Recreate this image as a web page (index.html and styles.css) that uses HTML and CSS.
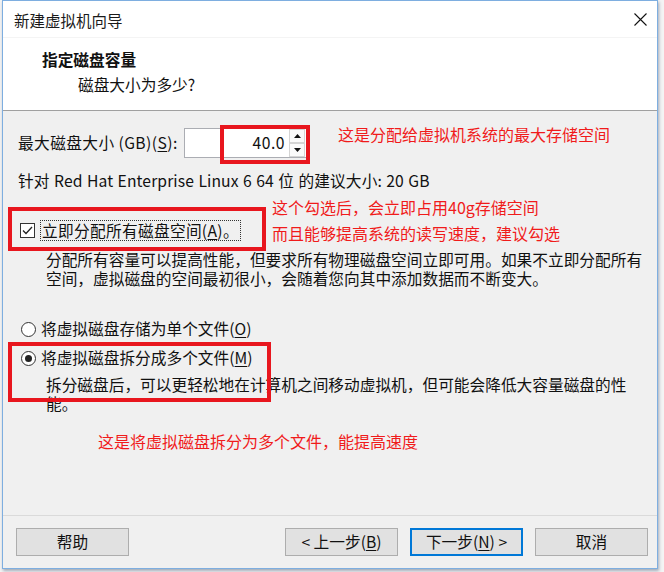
FILE: index.html
```html
<!DOCTYPE html>
<html lang="zh-CN">
<head>
<meta charset="utf-8">
<title>新建虚拟机向导</title>
<link rel="stylesheet" href="styles.css">
</head>
<body>
<div class="window">
  <div class="titlebar">
    <span class="title">新建虚拟机向导</span>
    <svg class="close" width="13" height="13" viewBox="0 0 13 13"><path d="M0.5 0.5 L12.5 12.5 M12.5 0.5 L0.5 12.5" stroke="#111" stroke-width="1.1" fill="none"/></svg>
  </div>
  <div class="header">
    <div class="h-title">指定磁盘容量</div>
    <div class="h-sub">磁盘大小为多少?</div>
  </div>
  <div class="content">
    <div class="size-row">
      <span class="label">最大磁盘大小 (GB)(<u>S</u>):</span>
      <div class="spin">
        <span class="spin-value">40.0</span>
        <div class="spin-btns">
          <span class="spin-btn"><svg width="7" height="4" viewBox="0 0 7 4"><path d="M0 4 L3.5 0 L7 4 Z" fill="#111"/></svg></span>
          <span class="spin-btn"><svg width="7" height="4" viewBox="0 0 7 4"><path d="M0 0 L3.5 4 L7 0 Z" fill="#111"/></svg></span>
        </div>
      </div>
      <span class="note note-size">这是分配给虚拟机系统的最大存储空间</span>
    </div>
    <div class="recommend">针对 Red Hat Enterprise Linux 6 64 位 的建议大小: 20 GB</div>
    <div class="check-block">
      <div class="check-row">
        <span class="checkbox"><svg width="11" height="9" viewBox="0 0 11 9"><path d="M1 4.5 L4 7.5 L10 1" stroke="#222" stroke-width="1.3" fill="none"/></svg></span>
        <span class="focus">立即分配所有磁盘空间(<u>A</u>)。</span>
      </div>
      <div class="check-notes">
        <div class="note">这个勾选后，会立即占用40g存储空间</div>
        <div class="note note-gap">而且能够提高系统的读写速度，建议勾选</div>
      </div>
    </div>
    <p class="desc desc-alloc">分配所有容量可以提高性能，但要求所有物理磁盘空间立即可用。如果不立即分配所有<br>空间，虚拟磁盘的空间最初很小，会随着您向其中添加数据而不断变大。</p>
    <div class="radio-row radio-first"><span class="radio"></span><span>将虚拟磁盘存储为单个文件(<u>O</u>)</span></div>
    <div class="radio-row radio-second"><span class="radio on"></span><span>将虚拟磁盘拆分成多个文件(<u>M</u>)</span></div>
    <p class="desc desc-split">拆分磁盘后，可以更轻松地在计算机之间移动虚拟机，但可能会降低大容量磁盘的性<br>能。</p>
    <div class="note note-bottom">这是将虚拟磁盘拆分为多个文件，能提高速度</div>
  </div>
  <div class="footer">
    <button class="btn">帮助</button>
    <span class="spacer"></span>
    <button class="btn">&lt; 上一步(<u>B</u>)</button>
    <button class="btn btn-default">下一步(<u>N</u>) &gt;</button>
    <button class="btn">取消</button>
  </div>
  <div class="mark mark-spin"></div>
  <div class="mark mark-check"></div>
  <div class="mark mark-radio"></div>
</div>
</body>
</html>
```
FILE: styles.css
```css
html, body {
  margin: 0;
  padding: 0;
  background: #f4f4f4;
  overflow: hidden;
}
body {
  font-family: "Noto Sans CJK SC", "Noto Sans", sans-serif;
  font-size: 15.7px;
  color: #111;
  width: 664px;
  height: 572px;
}
.window {
  position: relative;
  margin-left: 2px;
  width: 656px;
  height: 569px;
  box-sizing: border-box;
  border: 1px solid #7eaee0;
  background: #f0f0f0;
  display: flex;
  flex-direction: column;
  box-shadow: 1px 2px 3px rgba(60, 80, 110, 0.45);
}
.titlebar {
  height: 37px;
  background: #fff;
  display: flex;
  align-items: center;
  justify-content: space-between;
  padding: 0 10px 0 11px;
  border-bottom: 1px solid #f4f4f4;
  box-sizing: border-box;
}
.title {
  font-size: 15.5px;
  line-height: 20px;
  margin-top: 1px;
  color: #1a1a1a;
}
.close {
  display: block;
  margin-top: 1px;
}
.header {
  height: 73px;
  box-sizing: border-box;
  background: #fff;
  border-bottom: 1px solid #a0a0a0;
  padding-top: 12px;
}
.h-title {
  font-weight: bold;
  line-height: 20px;
  margin-left: 39px;
}
.h-sub {
  line-height: 20px;
  margin-top: 5px;
  margin-left: 75px;
}
.content {
  flex: 1;
  padding-left: 15px;
  line-height: 20px;
}
.size-row {
  display: flex;
  align-items: center;
  height: 30px;
  margin-top: 17px;
}
.label {
  width: 166px;
  letter-spacing: 0.4px;
}
.spin {
  position: relative;
  width: 124px;
  height: 30px;
  box-sizing: border-box;
  border: 1px solid #abadb3;
  background: #fff;
  display: flex;
  align-items: center;
  justify-content: flex-end;
}
.spin-value {
  margin-right: 4px;
  letter-spacing: 0.5px;
}
.spin-btns {
  display: flex;
  flex-direction: column;
  width: 16px;
  height: 28px;
  margin-right: 2px;
}
.spin-btn {
  flex: 1;
  display: flex;
  align-items: center;
  justify-content: center;
  border: 1px solid #d4d4d4;
  background: #fafafa;
}
.note {
  color: #f01b1b;
  font-size: 16px;
  line-height: 20px;
}
.note-size {
  align-self: flex-start;
  margin-top: -4px;
  margin-left: 30px;
}
.recommend {
  margin-top: 13px;
  word-spacing: 0.8px;
  letter-spacing: 0.1px;
}
.check-block {
  display: flex;
  margin-top: 6px;
}
.check-row {
  display: flex;
  align-items: center;
  width: 254px;
  padding-top: 23px;
  height: 21px;
}
.checkbox {
  width: 13px;
  height: 13px;
  border: 1px solid #333;
  background: #fff;
  display: flex;
  align-items: center;
  justify-content: center;
  margin-left: 2px;
  margin-right: 5px;
}
.focus {
  border: 1px dotted #333;
  line-height: 19px;
  padding: 0 1px;
  letter-spacing: 0.3px;
}
.note-gap {
  margin-top: 6px;
}
.desc {
  margin: 0;
  line-height: 19px;
}
.desc-alloc {
  margin: 7px 0 0 28px;
}
.radio-row {
  display: flex;
  align-items: center;
  height: 20px;
}
.radio-first {
  margin-top: 31px;
}
.radio-second {
  margin-top: 9px;
}
.radio {
  width: 13px;
  height: 13px;
  border: 1px solid #333;
  border-radius: 50%;
  background: #fff;
  margin-left: 3px;
  margin-right: 5px;
  display: flex;
  align-items: center;
  justify-content: center;
}
.radio.on::after {
  content: "";
  width: 7px;
  height: 7px;
  border-radius: 50%;
  background: #222;
}
.desc-split {
  margin: 7px 0 0 28px;
}
.note-bottom {
  margin: 18px 0 0 80px;
}
.footer {
  height: 53px;
  box-sizing: border-box;
  border-top: 1px solid #dadada;
  display: flex;
  align-items: flex-start;
  padding: 12px 9px 0 13px;
}
.spacer {
  flex: 1;
}
.btn {
  font-family: inherit;
  font-size: 15.7px;
  width: 113px;
  height: 28px;
  box-sizing: border-box;
  border: 1px solid #adadad;
  background: #e1e1e1;
  color: #111;
  padding: 0;
  margin-left: 12px;
  line-height: 20px;
}
.btn:first-child {
  margin-left: 0;
}
.btn-default {
  border: 2px solid #0078d7;
}
u {
  text-decoration: underline;
  text-underline-offset: 2px;
}
.mark {
  position: absolute;
  border: 4px solid #e8161e;
  box-sizing: border-box;
}
.mark-spin {
  left: 217px;
  top: 124px;
  width: 90px;
  height: 39px;
}
.mark-check {
  left: 5px;
  top: 206px;
  width: 258px;
  height: 44px;
}
.mark-radio {
  left: 5px;
  top: 341px;
  width: 263px;
  height: 60px;
}
```
